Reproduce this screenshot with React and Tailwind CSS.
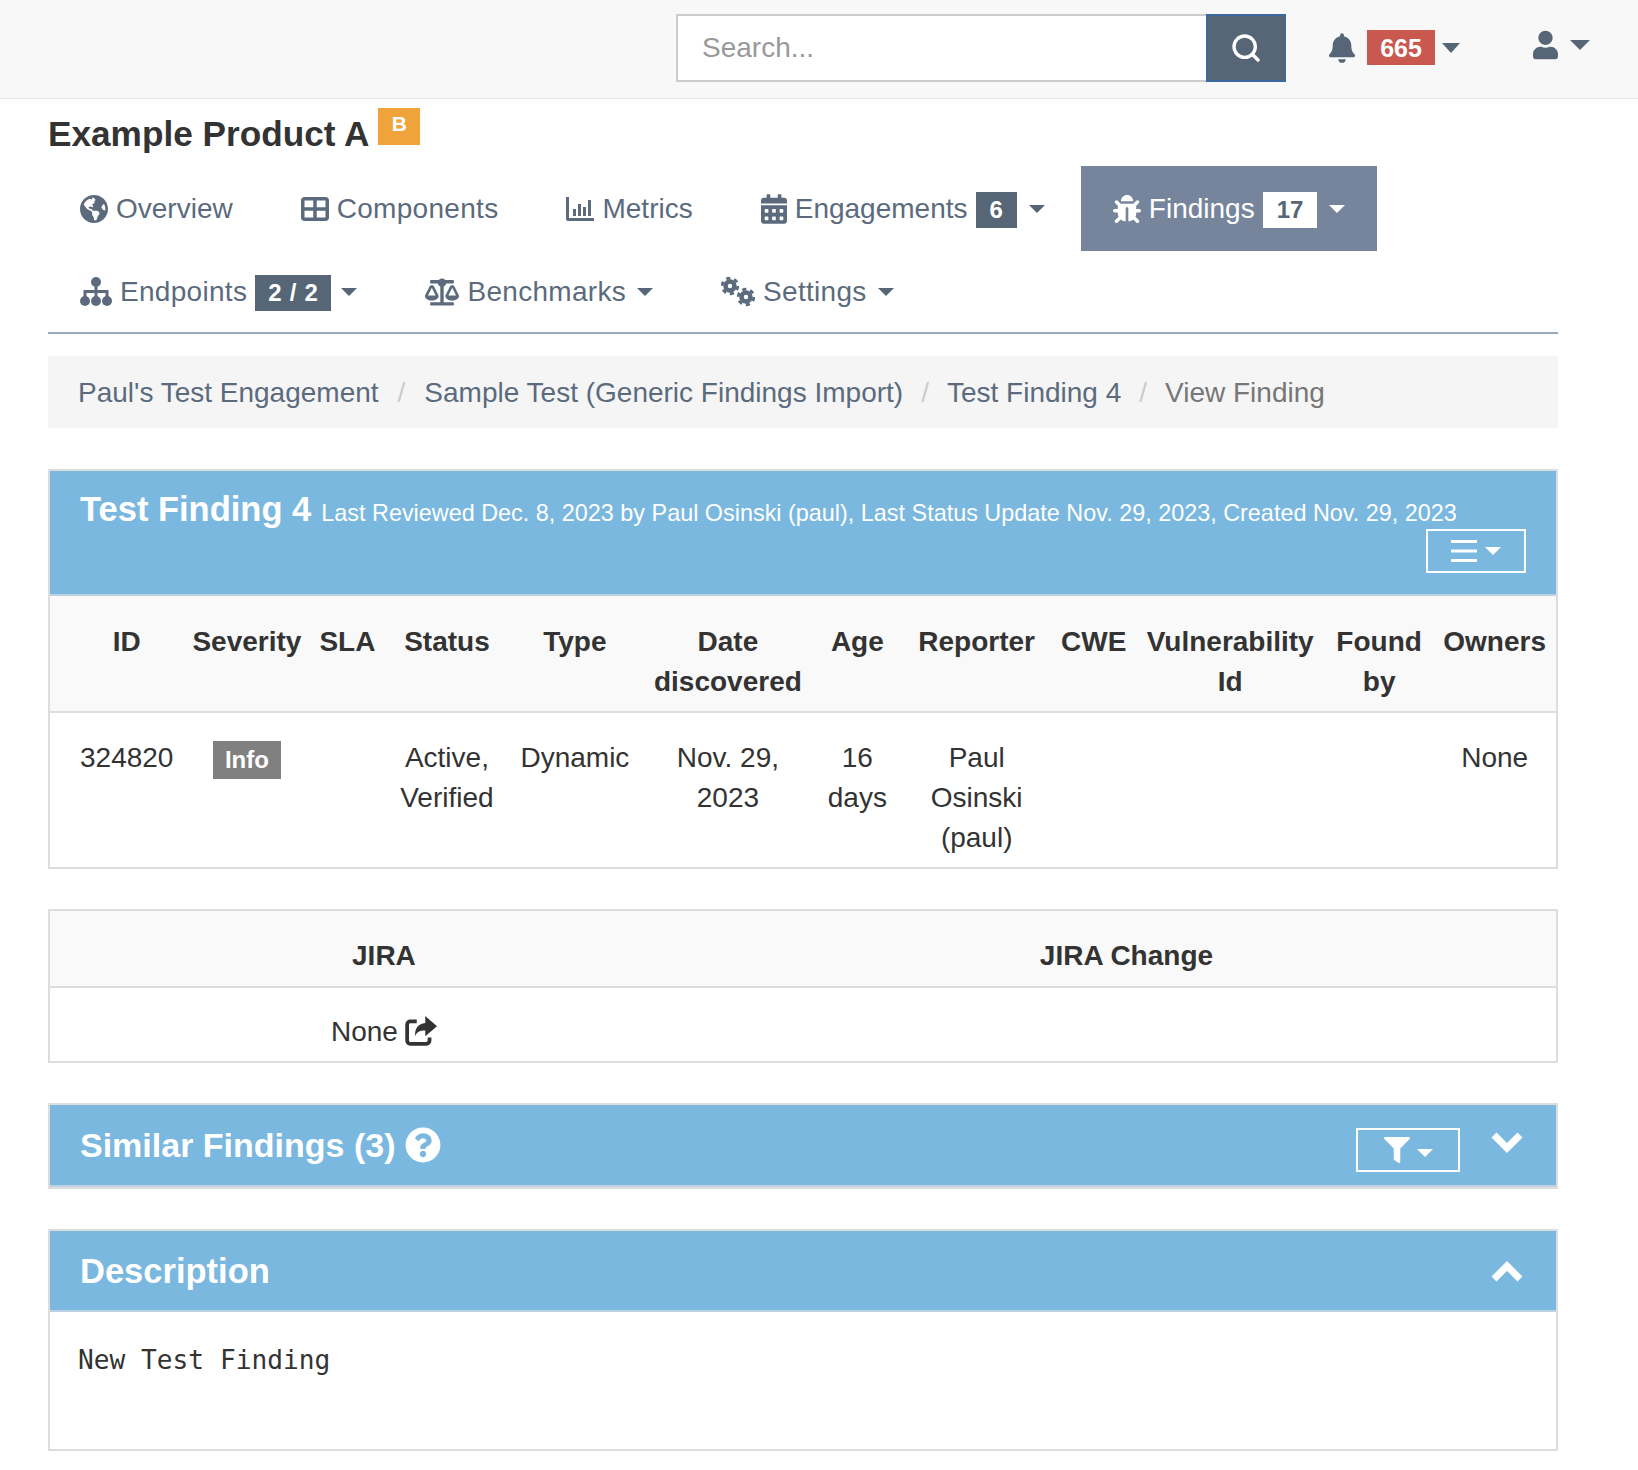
import { Search } from "lucide-react";
import { FaGlobeAmericas, FaCalendarAlt, FaBug, FaBalanceScale, FaBell, FaUser, FaQuestionCircle, FaFilter } from "react-icons/fa";

const Caret = ({ className = "border-t-[#566676] border-x-[8px] border-t-[8px]" }) => (
  <span className={`inline-block w-0 h-0 border-x-transparent ${className}`} />
);

const GridIcon = ({ className }) => (
  <svg viewBox="0 0 28 24" className={className} fill="none" stroke="currentColor" strokeWidth="3.500">
    <rect x="1.750" y="1.750" width="24.500" height="20.500" rx="2" />
    <path d="M14 1.500v21M1.500 12h25" />
  </svg>
);

const MetricsIcon = ({ className }) => (
  <svg viewBox="0 0 28 26" className={className} fill="currentColor">
    <path d="M0 1h3v21h25v3H2a2 2 0 0 1-2-2z" />
    <rect x="7" y="13" width="3" height="7" />
    <rect x="12" y="8" width="3" height="12" />
    <rect x="17" y="11" width="3" height="9" />
    <rect x="22" y="4" width="3" height="16" />
  </svg>
);

const SitemapIcon = ({ className }) => (
  <svg viewBox="0 0 32 30" className={className} fill="currentColor">
    <circle cx="16" cy="5" r="5" />
    <circle cx="5" cy="24" r="5" />
    <circle cx="16" cy="24" r="5" />
    <circle cx="27" cy="24" r="5" />
    <path d="M14.500 8h3v5h11v7h-3v-4h-8v4h-3v-4h-8v4h-3v-7h11z" />
  </svg>
);

const GearsIcon = ({ className }) => (
  <svg viewBox="0 0 34 30" className={className} fill="none" stroke="currentColor">
    <circle cx="9" cy="9" r="4.500" strokeWidth="4.500" />
    <circle cx="9" cy="9" r="7.800" strokeWidth="2.800" strokeDasharray="4.200 3.970" />
    <circle cx="25" cy="20" r="4.500" strokeWidth="4.500" />
    <circle cx="25" cy="20" r="7.800" strokeWidth="2.800" strokeDasharray="4.200 3.970" />
  </svg>
);

const ShareIcon = ({ className }) => (
  <svg viewBox="0 0 30 28" className={className}>
    <path d="M11 5H5a3 3 0 0 0-3 3v15a3 3 0 0 0 3 3h15a3 3 0 0 0 3-3v-3" fill="none" stroke="currentColor" strokeWidth="3.500" />
    <path d="M19 0l11 9.500L19 19v-5.500c-5 0-8 1-9.500 5.500-.5-8 3-11.500 9.500-12.500z" fill="currentColor" />
  </svg>
);

const BarsIcon = ({ className }) => (
  <svg viewBox="0 0 26 24" className={className} fill="currentColor">
    <rect y="1" width="26" height="3" />
    <rect y="10.500" width="26" height="3" />
    <rect y="20" width="26" height="3" />
  </svg>
);

const Chevron = ({ up, className }) => (
  <svg viewBox="0 0 32 22" className={className} fill="none" stroke="currentColor" strokeWidth="7">
    <path d={up ? "M3 19L16 6l13 13" : "M3 3l13 13L29 3"} />
  </svg>
);

function NavTab({ icon: Icon, label, badge, caret, active, iconClass = "w-[28px] h-[30px]", height = "h-[85px]", labelClass = "", badgeClass = "px-[14px]", caretGap = "ml-[12px]" }) {
  return (
    <div className={`${height} px-[32px] flex items-center ${active ? "bg-[#76859c] text-white" : "text-[#5b6b7d]"}`}>
      <Icon className={`${iconClass} mr-[8px] shrink-0`} />
      <span className={labelClass}>{label}</span>
      {badge && (
        <span className={`ml-[8px] h-[36px] mt-[3px] flex items-center text-[24px] font-bold ${badgeClass} ${active ? "bg-white text-[#566676]" : "bg-[#566676] text-white"}`}>
          {badge}
        </span>
      )}
      {caret && <Caret className={`${caretGap} border-x-[8px] border-t-[8px] ${active ? "border-t-white" : "border-t-[#566676]"}`} />}
    </div>
  );
}

// left/right cell padding per column, spacing in the source table isn't even
const columns = [
  { title: "ID", pad: "pl-[30px] pr-[8px]" },
  { title: "Severity", pad: "pl-[11px] pr-[8px]" },
  { title: "SLA", pad: "pl-[10px] pr-[12px]" },
  { title: "Status", pad: "pl-[12px] pr-[13px]" },
  { title: "Type", pad: "pl-[13px] pr-[12px]" },
  { title: "Date discovered", pad: "pl-[12px] pr-[12px]" },
  { title: "Age", pad: "pl-[13px] pr-[13px]" },
  { title: "Reporter", pad: "pl-[17px] pr-[13px]" },
  { title: "CWE", pad: "pl-[12px] pr-[10px]" },
  { title: "Vulnerability Id", pad: "pl-[10px] pr-[13px]" },
  { title: "Found by", pad: "pl-[9px] pr-[10px]" },
  { title: "Owners", pad: "pl-[11px] pr-[10px]" },
];

export default function App() {
  return (
    <div className="min-h-[1470px] bg-white text-[#333] text-[28px] leading-[40px] font-['Liberation_Sans',Arial,sans-serif]">
      {/* top navbar */}
      <div className="h-[99px] bg-[#f8f8f8] border-b border-[#e7e7e7] flex items-start justify-end pr-[48px] pt-[14px]">
        <div className="flex h-[68px] w-[610px]">
          <div className="flex-1 bg-white border-2 border-[#ccc] border-r-0 pl-[24px] flex items-center text-[#999]">Search...</div>
          <div className="w-[80px] bg-[#566676] border-2 border-[#3d6a9e] flex items-center justify-center text-white">
            <Search size={32} strokeWidth={2.5} />
          </div>
        </div>
        <div className="flex items-center text-[#566676] ml-[43px] mt-[16px]">
          <FaBell className="w-[26px] h-[30px]" />
          <span className="ml-[12px] w-[68px] h-[35px] bg-[#c9584f] text-white text-[25px] font-bold flex items-center justify-center">665</span>
          <Caret className="ml-[7px] border-t-[#566676] border-x-[9px] border-t-[10px]" />
        </div>
        <div className="flex items-center text-[#566676] ml-[73px] mt-[16px]">
          <FaUser className="w-[25px] h-[30px]" />
          <Caret className="ml-[12px] border-t-[#566676] border-x-[10px] border-t-[10px]" />
        </div>
      </div>

      <div className="pl-[48px] pr-[80px]">
        {/* product title */}
        <div className="flex items-start h-[67px]">
          <h1 className="text-[35.200px] leading-[40px] font-bold mt-[15px] text-[#333]">Example Product A</h1>
          <span className="ml-[9px] mt-[9px] w-[42px] h-[37px] bg-[#f0a33a] text-white text-[21px] font-bold flex items-start justify-center leading-[32px]">B</span>
        </div>

        {/* tabs */}
        <div className="flex flex-wrap gap-x-[4px] border-b-2 border-[#9aa9b9] w-full">
          <NavTab icon={FaGlobeAmericas} label="Overview" />
          <NavTab icon={GridIcon} label="Components" labelClass="tracking-[0.3px]" />
          <NavTab icon={MetricsIcon} label="Metrics" iconClass="w-[28px] h-[26px]" />
          <NavTab icon={FaCalendarAlt} label="Engagements" badge="6" caret iconClass="w-[26px] h-[30px]" />
          <NavTab icon={FaBug} label="Findings" badge="17" caret active />
          <div className="w-full h-0" />
          <NavTab icon={SitemapIcon} label="Endpoints" badge="2 / 2" caret height="h-[81px]" iconClass="w-[32px] h-[30px]" labelClass="tracking-[0.3px]" badgeClass="px-[13px] tracking-[0.7px]" caretGap="ml-[10px]" />
          <NavTab icon={FaBalanceScale} label="Benchmarks" caret height="h-[81px]" iconClass="w-[34px] h-[30px]" labelClass="tracking-[0.3px]" caretGap="ml-[11px]" />
          <NavTab icon={GearsIcon} label="Settings" caret height="h-[81px]" iconClass="w-[34px] h-[30px]" labelClass="tracking-[0.3px]" caretGap="ml-[11px]" />
        </div>

        {/* breadcrumb */}
        <div className="mt-[22px] h-[72px] pt-[1px] bg-[#f5f5f5] px-[30px] flex items-center text-[#5b6b7d]">
          <span>Paul's Test Engagement</span>
          <span className="px-[19px] text-[#ccc]">/</span>
          <span>Sample Test (Generic Findings Import)</span>
          <span className="px-[18px] text-[#ccc]">/</span>
          <span>Test Finding 4</span>
          <span className="px-[18px] text-[#ccc]">/</span>
          <span className="text-[#777]">View Finding</span>
        </div>

        {/* finding panel */}
        <div className="mt-[41px] border-2 border-[#ddd]">
          <div className="h-[125px] bg-[#7ab8df] text-white pl-[30px] pr-[30px] pt-[18px] border-b-2 border-[#bcd2e2]">
            <div className="flex items-baseline">
              <span className="text-[34.500px] font-bold">Test Finding 4</span>
              <span className="ml-[10px] text-[23.400px]">Last Reviewed Dec. 8, 2023 by Paul Osinski (paul), Last Status Update Nov. 29, 2023, Created Nov. 29, 2023</span>
            </div>
            <div className="flex justify-end -mt-[4px]">
              <div className="w-[100px] h-[44px] border-2 border-white flex items-center justify-center">
                <BarsIcon className="w-[26px] h-[24px]" />
                <Caret className="ml-[8px] border-t-white border-x-[8px] border-t-[8px]" />
              </div>
            </div>
          </div>
          <table className="w-full border-collapse">
            <thead>
              <tr className="bg-[#f9f9f9] border-b-2 border-[#ddd]">
                {columns.map((c) => (
                  <th key={c.title} className={`pt-[26px] pb-[9px] font-bold align-top text-center ${c.pad}`}>{c.title}</th>
                ))}
              </tr>
            </thead>
            <tbody>
              <tr className="text-center align-top">
                <td className={`pt-[25px] ${columns[0].pad}`}>324820</td>
                <td className={`pt-[26px] ${columns[1].pad}`}>
                  <span className="inline-block w-[68px] h-[38px] bg-[#808080] text-white text-[24px] font-bold leading-[38px]">Info</span>
                </td>
                <td />
                <td className={`pt-[25px] ${columns[3].pad}`}>Active, Verified</td>
                <td className={`pt-[25px] ${columns[4].pad}`}>Dynamic</td>
                <td className={`pt-[25px] ${columns[5].pad}`}>Nov. 29, 2023</td>
                <td className={`pt-[25px] ${columns[6].pad}`}>16 days</td>
                <td className={`pt-[25px] pb-[9px] ${columns[7].pad}`}>Paul Osinski (paul)</td>
                <td />
                <td />
                <td />
                <td className={`pt-[25px] ${columns[11].pad}`}>None</td>
              </tr>
            </tbody>
          </table>
        </div>

        {/* jira panel */}
        <div className="mt-[40px] border-2 border-[#ddd]">
          <div className="grid grid-cols-[44.35%_1fr] h-[77px] pt-[25px] bg-[#f9f9f9] border-b-2 border-[#ddd] font-bold text-center">
            <div>JIRA</div>
            <div className="pr-[21px]">JIRA Change</div>
          </div>
          <div className="grid grid-cols-[44.35%_1fr] h-[73px] pt-[24px] text-center">
            <div className="flex items-center justify-center h-[40px]">
              None <ShareIcon className="w-[32px] h-[30px] ml-[7px] -mt-[2px]" />
            </div>
            <div />
          </div>
        </div>

        {/* similar findings */}
        <div className="mt-[40px] border-2 border-[#ddd]">
          <div className="h-[82px] bg-[#7ab8df] text-white pl-[30px] pr-[33px] flex items-center justify-between border-b-2 border-[#bcd2e2]">
            <div className="flex items-center">
              <span className="text-[34px] font-bold">Similar Findings (3)</span>
              <FaQuestionCircle className="w-[36px] h-[36px] ml-[10px]" />
            </div>
            <div className="flex items-center">
              <div className="w-[104px] h-[44px] border-2 border-white flex items-center justify-center mt-[10px]">
                <FaFilter className="w-[28px] h-[26px]" />
                <Caret className="ml-[6px] mt-[6px] border-t-white border-x-[8px] border-t-[8px]" />
              </div>
              <Chevron className="w-[32px] h-[22px] ml-[31px] -mt-[4px]" />
            </div>
          </div>
        </div>

        {/* description */}
        <div className="mt-[40px] border-2 border-[#ddd]">
          <div className="h-[81px] bg-[#7ab8df] text-white pl-[30px] pr-[33px] flex items-center justify-between border-b-2 border-[#bcd2e2]">
            <span className="text-[34.500px] font-bold">Description</span>
            <Chevron up className="w-[32px] h-[22px]" />
          </div>
          <div className="h-[137px] px-[28px] pt-[28px] font-['DejaVu_Sans_Mono',monospace] text-[26.200px] text-[#333]">New Test Finding</div>
        </div>
      </div>
    </div>
  );
}
